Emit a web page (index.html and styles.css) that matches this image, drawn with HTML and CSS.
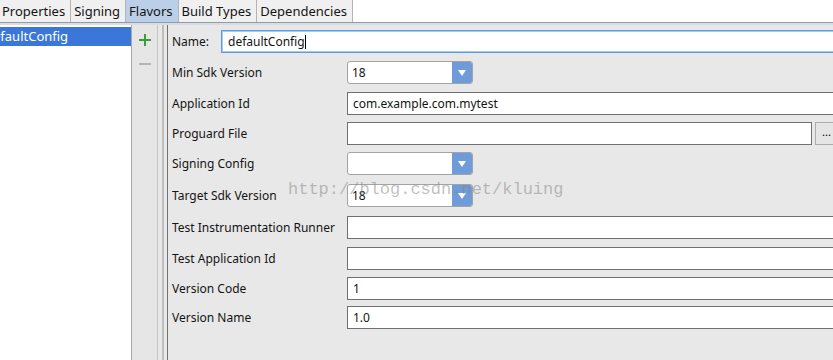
FILE: index.html
```html
<!DOCTYPE html>
<html lang="en">
<head>
  <meta charset="UTF-8">
  <meta name="viewport" content="width=device-width, initial-scale=1.0">
  <link rel="stylesheet" href="styles.css">
  <title>Project Structure - Flavors</title>
</head>
<body>

<div class="tabs">
  <span class="tab">Properties</span>
  <span class="tab">Signing</span>
  <span class="tab selected">Flavors</span>
  <span class="tab">Build Types</span>
  <span class="tab">Dependencies</span>
</div>

<div class="main">
  <div class="list">
    <div class="item selected"><span class="scrolled">defaultConfig</span></div>
  </div>

  <div class="tools">
    <svg class="tool" width="14" height="14" viewBox="0 0 14 14">
      <rect x="6" y="1" width="2" height="12" fill="#3a9c3a"/>
      <rect x="1" y="6" width="12" height="2" fill="#3a9c3a"/>
    </svg>
    <svg class="tool" width="14" height="14" viewBox="0 0 14 14">
      <rect x="1" y="6" width="12" height="2" fill="#b4b4b4"/>
    </svg>
  </div>

  <div class="splitter"><div class="dots"></div></div>

  <div class="form">
    <div class="name-row">
      <label>Name:</label>
      <div class="field focus">defaultConfig<span class="caret"></span></div>
    </div>

    <div class="grid">
      <label>Min Sdk Version</label>
      <div class="combo"><span class="value">18</span><span class="arrow"></span></div>

      <label>Application Id</label>
      <div class="field wide">com.example.com.mytest</div>

      <label>Proguard File</label>
      <div class="file">
        <div class="field"></div>
        <button class="browse">...</button>
      </div>

      <label>Signing Config</label>
      <div class="combo"><span class="value"></span><span class="arrow"></span></div>

      <label>Target Sdk Version</label>
      <div class="combo"><span class="value">18</span><span class="arrow"></span></div>

      <label>Test Instrumentation Runner</label>
      <div class="field wide"></div>

      <label>Test Application Id</label>
      <div class="field wide"></div>

      <label>Version Code</label>
      <div class="field wide">1</div>

      <label>Version Name</label>
      <div class="field wide">1.0</div>
    </div>
  </div>
</div>

<div class="watermark">http://blog.csdn.net/kluing</div>

</body>
</html>
```

FILE: styles.css
```css
body {
  margin: 0;
  font-family: "Noto Sans", Arial, sans-serif;
  font-size: 12px;
  color: #141414;
  background-color: #e8e8e8;
  width: 833px;
  height: 360px;
  overflow: hidden;
  position: relative;
}

.tabs {
  display: flex;
  height: 22px;
  background-color: #fff;
  border-bottom: 1px solid #8d9cb2;
}

.tab {
  display: flex;
  align-items: center;
  padding: 0 5px 0 2px;
  font-size: 13px;
  background-color: #f0f0f0;
  border-right: 1px solid #b4b4b4;
}

.tab + .tab {
  padding-left: 3px;
}

.tab.selected {
  background-color: #bccfe9;
}

.main {
  display: flex;
  height: 337px;
  border-top: 2px solid #dcdcdc;
}

.list {
  width: 131px;
  background-color: #fff;
  padding-top: 2px;
  overflow: hidden;
}

.item {
  height: 19px;
  line-height: 19px;
  font-size: 13px;
  white-space: nowrap;
  overflow: hidden;
}

.item.selected {
  background-color: #3b77d8;
  color: #fff;
}

.scrolled {
  margin-left: -15px;
}

.tools {
  width: 25px;
  border-left: 1px solid #a8a8a8;
  display: flex;
  flex-direction: column;
  align-items: center;
  gap: 10px;
  padding-top: 8px;
  background-color: #e6e6e6;
}

.splitter {
  width: 9px;
  border-left: 1px solid #c4c4c4;
  border-right: 1px solid #707070;
  display: flex;
  justify-content: center;
}

.dots {
  width: 2px;
  background-image: radial-gradient(circle, #8c8c8c 0.6px, transparent 0.8px);
  background-size: 2px 2px;
}

.form {
  flex: 1;
  padding: 5px 0 0 4px;
  overflow: hidden;
}

.name-row {
  display: flex;
  align-items: center;
  margin-bottom: 8px;
}

.name-row label {
  width: 49px;
}

.name-row .field {
  flex: 1;
  margin-right: -8px;
}

.field {
  height: 21px;
  border: 1px solid #707070;
  background-color: #fff;
  display: flex;
  align-items: center;
  padding-left: 5px;
  font-size: 12px;
}

.field.focus {
  border-color: #5b9be2;
  box-shadow: inset 0 0 0 1px #a8cbf3;
  padding-left: 6px;
}

.caret {
  width: 1px;
  height: 14px;
  background-color: #000;
}

.field.wide {
  margin-right: -8px;
}

.grid {
  display: grid;
  grid-template-columns: 175px 1fr;
  grid-template-rows: 31px 30px 30px 32px 32px 31px 30px 29px 23px;
  align-items: start;
}

.grid label {
  height: 23px;
  line-height: 23px;
}

.combo {
  width: 124px;
  height: 21px;
  border: 1px solid #a3a3a3;
  border-radius: 3px;
  background-color: #fff;
  display: flex;
  overflow: hidden;
}

.combo .value {
  flex: 1;
  line-height: 21px;
  padding-left: 4px;
}

.combo .arrow {
  width: 20px;
  background-color: #6f9cd8;
  position: relative;
}

.combo .arrow::after {
  content: "";
  position: absolute;
  left: 6px;
  top: 8px;
  border-left: 4px solid transparent;
  border-right: 4px solid transparent;
  border-top: 6px solid #fff;
}

.file {
  display: flex;
  gap: 3px;
  margin-right: -8px;
}

.file .field {
  flex: 1;
}

.browse {
  width: 26px;
  height: 23px;
  border: 1px solid #acacac;
  background-color: #e5e5e5;
  font-family: "Noto Sans", Arial, sans-serif;
  font-size: 11px;
  padding: 0 0 4px 0;
  text-align: left;
  padding-left: 6px;
}

.watermark {
  position: absolute;
  left: 288px;
  top: 180px;
  font-family: "Liberation Mono", monospace;
  font-size: 17px;
  color: rgba(130, 130, 130, 0.5);
  pointer-events: none;
}
```
